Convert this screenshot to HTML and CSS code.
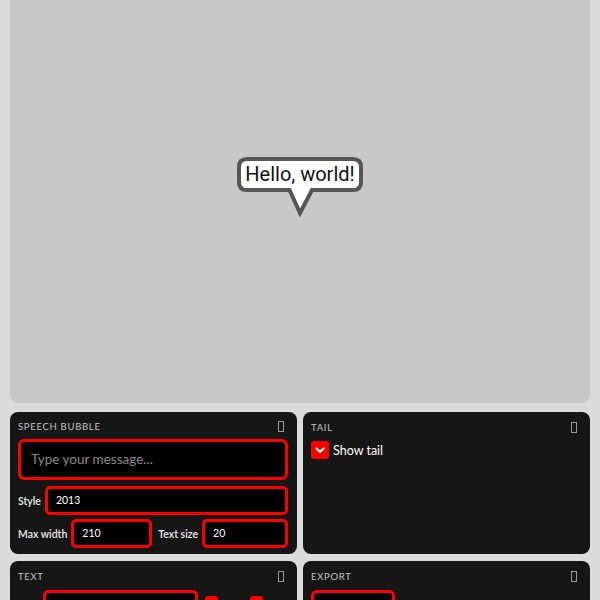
FILE: index.html
```html
<!DOCTYPE html>
<html>
<head>
<meta charset="utf-8">
<link rel="stylesheet" href="styles.css">
</head>
<body>
<div class="canvas">
  <svg class="stage" viewBox="0 0 580 403" width="580" height="403">
    <path class="bubble" d="M237 159 H343 Q351 159 351 167 V182 Q351 190 343 190 H302 L290 213 L279.5 190 H237 Q229 190 229 182 V167 Q229 159 237 159 Z"/>
    <text class="bubble-text" x="290" y="181" text-anchor="middle">Hello, world!</text>
  </svg>
</div>
<div class="panels">
  <section class="card">
    <header class="card-head"><span class="card-title">SPEECH BUBBLE</span><span class="tofu"></span></header>
    <div class="message">Type your message...</div>
    <div class="row">
      <span class="lbl">Style</span>
      <div class="field grow">2013</div>
    </div>
    <div class="row">
      <span class="lbl">Max width</span>
      <div class="field w81">210</div>
      <span class="lbl lbl2">Text size</span>
      <div class="field grow">20</div>
    </div>
  </section>
  <section class="card">
    <header class="card-head"><span class="card-title">TAIL</span><span class="tofu"></span></header>
    <div class="check-row">
      <span class="check">
        <svg width="10" height="7" viewBox="0 0 10 7"><polyline points="1.5,1.5 5,5 8.5,1.5" fill="none" stroke="#fff" stroke-width="2" stroke-linecap="round" stroke-linejoin="round"/></svg>
      </span>
      <span class="check-label">Show tail</span>
    </div>
  </section>
  <section class="card">
    <header class="card-head"><span class="card-title">TEXT</span><span class="tofu"></span></header>
    <div class="row text-row">
      <span class="spacer"></span>
      <div class="field font-field"></div>
      <span class="mini"></span>
      <span class="mini mini2"></span>
    </div>
  </section>
  <section class="card">
    <header class="card-head"><span class="card-title">EXPORT</span><span class="tofu"></span></header>
    <div class="row text-row">
      <div class="button"></div>
    </div>
  </section>
</div>
</body>
</html>
```
FILE: styles.css
```css
html, body {
  margin: 0;
  padding: 0;
}
body {
  background: #dbdbdc;
  font-family: "Lato", "Noto Sans", sans-serif;
  color: #fff;
  width: 600px;
  height: 600px;
  overflow: hidden;
}
.canvas {
  position: relative;
  margin: 0 10px;
  height: 403px;
  background: #c8c8c8;
  border-radius: 0 0 8px 8px;
}
.stage {
  position: absolute;
  left: 0;
  top: 0;
}
.bubble {
  fill: #fff;
  stroke: #555;
  stroke-width: 4;
  stroke-linejoin: miter;
}
.bubble-text {
  font-family: "Roboto", "Liberation Sans", sans-serif;
  font-size: 20px;
  fill: #111;
}
.panels {
  display: grid;
  grid-template-columns: minmax(0, 1fr) minmax(0, 1fr);
  grid-auto-rows: 142px;
  gap: 7px 6px;
  margin: 9px 10px 0;
}
.card {
  background: #161616;
  border-radius: 8px;
  padding: 8px 9px 5px 8px;
  display: flex;
  flex-direction: column;
  overflow: hidden;
  min-width: 0;
}
.card-head {
  display: flex;
  justify-content: space-between;
  align-items: center;
  height: 14px;
  margin-bottom: 7px;
}
.card-title {
  font-size: 9.5px;
  letter-spacing: 0.7px;
  color: #c4c4c4;
}
.tofu {
  width: 4px;
  height: 9px;
  border: 1px solid #999;
  margin-right: 4px;
  margin-top: 1px;
}
.message {
  height: 35px;
  flex: none;
  border: 3px solid #f00;
  border-radius: 6px;
  background: #000;
  color: #8a8a8a;
  font-size: 13.5px;
  line-height: 35px;
  padding-left: 10px;
  margin-bottom: 6px;
}
.row {
  display: flex;
  align-items: center;
  gap: 4px;
  margin-bottom: 4px;
}
.lbl {
  font-size: 10.5px;
  font-weight: 600;
  color: #eee;
  white-space: nowrap;
}
.lbl2 {
  margin-left: 2px;
}
.field {
  height: 23px;
  line-height: 23px;
  border: 3px solid #f00;
  border-radius: 5px;
  background: #000;
  color: #fff;
  font-size: 10.5px;
  padding-left: 8px;
  box-sizing: content-box;
  min-width: 0;
}
.grow {
  flex: 1;
}
.w81 {
  width: 67px;
  flex: none;
}
.check-row {
  display: flex;
  align-items: center;
  gap: 4px;
}
.check {
  flex: none;
  width: 18px;
  height: 18px;
  border-radius: 3px;
  background: #f00;
  display: flex;
  align-items: center;
  justify-content: center;
}
.check-label {
  font-size: 12.5px;
  color: #fff;
}
.text-row {
  align-items: flex-start;
  gap: 0;
}
.spacer {
  width: 25px;
  flex: none;
}
.font-field {
  width: 141px;
  flex: none;
}
.mini {
  flex: none;
  width: 13px;
  height: 13px;
  background: #f00;
  border-radius: 3px;
  margin-top: 6px;
  margin-left: 7px;
}
.mini2 {
  margin-left: 32px;
}
.button {
  width: 78px;
  height: 26px;
  border: 3px solid #f00;
  border-radius: 6px;
  background: #000;
}
```
